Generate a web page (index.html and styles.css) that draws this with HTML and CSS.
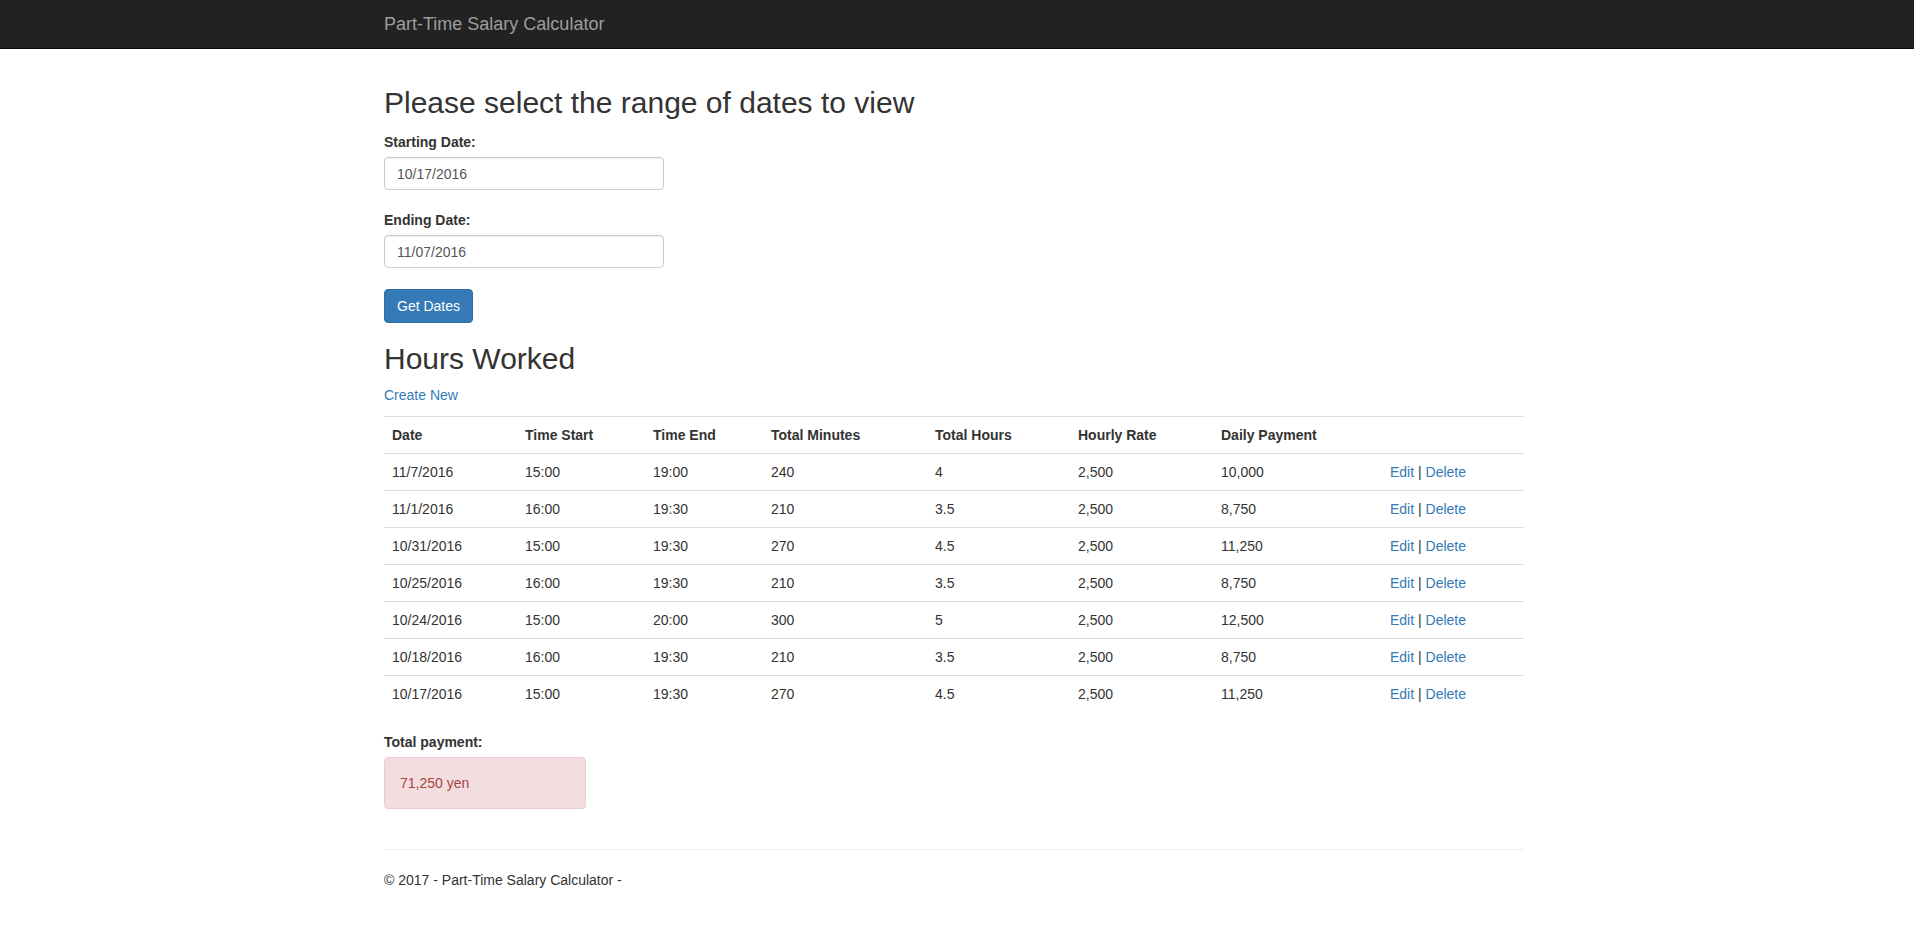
FILE: index.html
```html
<!DOCTYPE html>
<html>
<head>
<meta charset="utf-8">
<title>Part-Time Salary Calculator</title>
<link rel="stylesheet" href="styles.css">
</head>
<body>
<header class="navbar">
  <div class="container">
    <span class="brand">Part-Time Salary Calculator</span>
  </div>
</header>
<main class="container body-content">
  <h2 class="title">Please select the range of dates to view</h2>
  <form class="date-form">
    <div class="form-group">
      <label class="label">Starting Date:</label>
      <input class="form-control" type="text" value="10/17/2016">
    </div>
    <div class="form-group form-group-wide">
      <label class="label">Ending Date:</label>
      <input class="form-control" type="text" value="11/07/2016">
    </div>
    <div class="form-group">
      <button type="button" class="btn">Get Dates</button>
    </div>
  </form>
  <h2 class="section-title">Hours Worked</h2>
  <p class="create"><a href="#">Create New</a></p>
  <table class="table">
    <colgroup>
      <col class="c1"><col class="c2"><col class="c3"><col class="c4"><col class="c5"><col class="c6"><col class="c7"><col class="c8">
    </colgroup>
    <tr><th>Date</th><th>Time Start</th><th>Time End</th><th>Total Minutes</th><th>Total Hours</th><th>Hourly Rate</th><th>Daily Payment</th><th></th></tr>
    <tr><td>11/7/2016</td><td>15:00</td><td>19:00</td><td>240</td><td>4</td><td>2,500</td><td>10,000</td><td><a href="#">Edit</a> | <a href="#">Delete</a></td></tr>
    <tr><td>11/1/2016</td><td>16:00</td><td>19:30</td><td>210</td><td>3.5</td><td>2,500</td><td>8,750</td><td><a href="#">Edit</a> | <a href="#">Delete</a></td></tr>
    <tr><td>10/31/2016</td><td>15:00</td><td>19:30</td><td>270</td><td>4.5</td><td>2,500</td><td>11,250</td><td><a href="#">Edit</a> | <a href="#">Delete</a></td></tr>
    <tr><td>10/25/2016</td><td>16:00</td><td>19:30</td><td>210</td><td>3.5</td><td>2,500</td><td>8,750</td><td><a href="#">Edit</a> | <a href="#">Delete</a></td></tr>
    <tr><td>10/24/2016</td><td>15:00</td><td>20:00</td><td>300</td><td>5</td><td>2,500</td><td>12,500</td><td><a href="#">Edit</a> | <a href="#">Delete</a></td></tr>
    <tr><td>10/18/2016</td><td>16:00</td><td>19:30</td><td>210</td><td>3.5</td><td>2,500</td><td>8,750</td><td><a href="#">Edit</a> | <a href="#">Delete</a></td></tr>
    <tr><td>10/17/2016</td><td>15:00</td><td>19:30</td><td>270</td><td>4.5</td><td>2,500</td><td>11,250</td><td><a href="#">Edit</a> | <a href="#">Delete</a></td></tr>
  </table>
  <div class="total">
    <span class="label">Total payment:</span>
    <div class="alert">71,250 yen</div>
  </div>
  <hr class="rule">
  <footer class="footer">
    <p>&copy; 2017 - Part-Time Salary Calculator -</p>
  </footer>
</main>
</body>
</html>
```
FILE: styles.css
```css
* { box-sizing: border-box; }
html, body { margin: 0; padding: 0; }
body {
  font-family: "Liberation Sans", Arial, Helvetica, sans-serif;
  font-size: 14px;
  line-height: 20px;
  color: #333;
  background: #fff;
}
a { color: #337ab7; text-decoration: none; }
.container {
  width: 1140px;
  margin-left: calc(50% - 573px);
}
.navbar {
  background: #222;
  border-bottom: 1px solid #080808;
  height: 49px;
}
.navbar .container {
  display: flex;
  align-items: center;
  height: 48px;
}
.brand {
  color: #9d9d9d;
  font-size: 18px;
  line-height: 20px;
}
.title, .section-title {
  font-family: "Liberation Sans", Arial, sans-serif;
  font-weight: 500;
  font-size: 30px;
  line-height: 33px;
  margin: 0;
  color: #333;
}
.title { margin-top: 37px; margin-bottom: 13px; }
.section-title { margin-top: 19px; margin-bottom: 10px; }
.form-group { margin-bottom: 20px; }
.form-group-wide { margin-bottom: 21px; }
.form-group:last-child { margin-bottom: 0; }
.label {
  display: block;
  font-weight: bold;
  margin-bottom: 5px;
  line-height: 20px;
}
.form-control {
  display: block;
  width: 280px;
  height: 33px;
  padding: 6px 12px;
  font-family: inherit;
  font-size: 14px;
  line-height: 20px;
  color: #555;
  background: #fff;
  border: 1px solid #ccc;
  border-radius: 4px;
  box-shadow: inset 0 1px 1px rgba(0,0,0,.075);
  margin: 0;
}
.btn {
  display: inline-block;
  height: 34px;
  padding: 6px 12px;
  font-family: inherit;
  font-size: 14px;
  line-height: 20px;
  color: #fff;
  background: #337ab7;
  border: 1px solid #2e6da4;
  border-radius: 4px;
  margin: 0;
}
.create { margin: 0 0 11px; }
.table {
  width: 1140px;
  border-collapse: collapse;
  table-layout: fixed;
  margin-bottom: 20px;
}
.c1 { width: 133px; }
.c2 { width: 128px; }
.c3 { width: 118px; }
.c4 { width: 164px; }
.c5 { width: 143px; }
.c6 { width: 143px; }
.c7 { width: 169px; }
.c8 { width: 142px; }
.table th, .table td {
  padding: 8px;
  line-height: 20px;
  text-align: left;
  vertical-align: top;
  border-top: 1px solid #ddd;
}
.table th { font-weight: bold; }
.total { margin-top: 0; }
.total .label { margin-bottom: 5px; }
.alert {
  width: 202px;
  padding: 15px;
  background: #f2dede;
  border: 1px solid #ebccd1;
  color: #a94442;
  border-radius: 4px;
  line-height: 20px;
}
.rule {
  margin: 40px 0 20px;
  border: 0;
  border-top: 1px solid #eee;
  height: 0;
}
.footer p { margin: 0 0 10px; }
```
